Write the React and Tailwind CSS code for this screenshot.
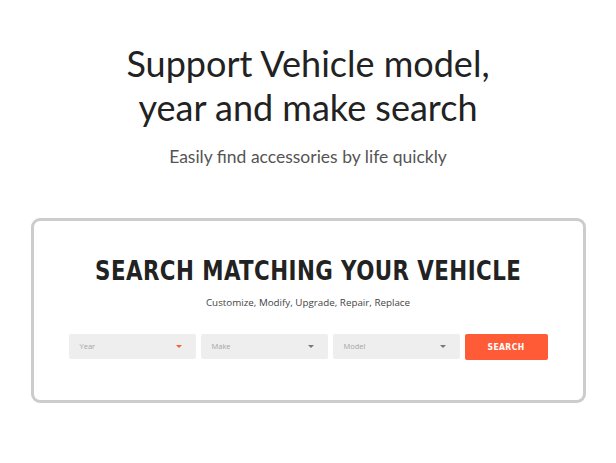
import React from 'react';

function Caret({ color = 'border-t-[#777]' }) {
  return (
    <span
      className={`w-0 h-0 border-l-[3px] border-r-[3px] border-t-[3px] border-l-transparent border-r-transparent ${color}`}
    />
  );
}

function SelectBox({ label, accent }) {
  return (
    <div className="w-[127px] h-[25px] bg-[#eeeeee] rounded-[2px] flex items-center justify-between pl-[11px] pr-[14px]">
      <span className="text-[7.5px] text-[#a5a5a5] font-['Open_Sans',sans-serif] pt-[1px]">{label}</span>
      <Caret color={accent ? 'border-t-[#ff5b37]' : 'border-t-[#777]'} />
    </div>
  );
}

export default function App() {
  return (
    <div className="w-[616px] h-[463px] bg-white flex flex-col items-center font-['Lato',sans-serif]">
      <h1 className="mt-[41px] text-center text-[36px] leading-[44px] text-[#222] font-['Lato',sans-serif] font-normal">
        Support Vehicle model,
        <br />
        year and make search
      </h1>
      <p className="mt-[15px] text-[17.5px] text-[#555] font-['Lato',sans-serif]">
        Easily find accessories by life quickly
      </p>

      <div className="mt-[48px] w-[555px] h-[185px] border-[3px] border-[#cccccc] rounded-[9px] flex flex-col items-center">
        <h2 className="mt-[33px] text-[27px] leading-[34px] font-bold text-[#222] tracking-[0.5px] scale-x-[0.88] whitespace-nowrap font-['DejaVu_Sans_Condensed','DejaVu_Sans',sans-serif]">
          SEARCH MATCHING YOUR VEHICLE
        </h2>
        <p className="mt-[8px] text-[9.8px] text-[#444] font-['Open_Sans',sans-serif]">
          Customize, Modify, Upgrade, Repair, Replace
        </p>
        <div className="mt-[23px] flex gap-[5px]">
          <SelectBox label="Year" accent />
          <SelectBox label="Make" />
          <SelectBox label="Model" />
          <button className="w-[83px] h-[26px] bg-[#ff5b37] rounded-[2px] text-white text-[8.5px] font-bold tracking-[0.4px] font-['DejaVu_Sans_Condensed','Roboto',sans-serif]">
            SEARCH
          </button>
        </div>
      </div>
    </div>
  );
}
